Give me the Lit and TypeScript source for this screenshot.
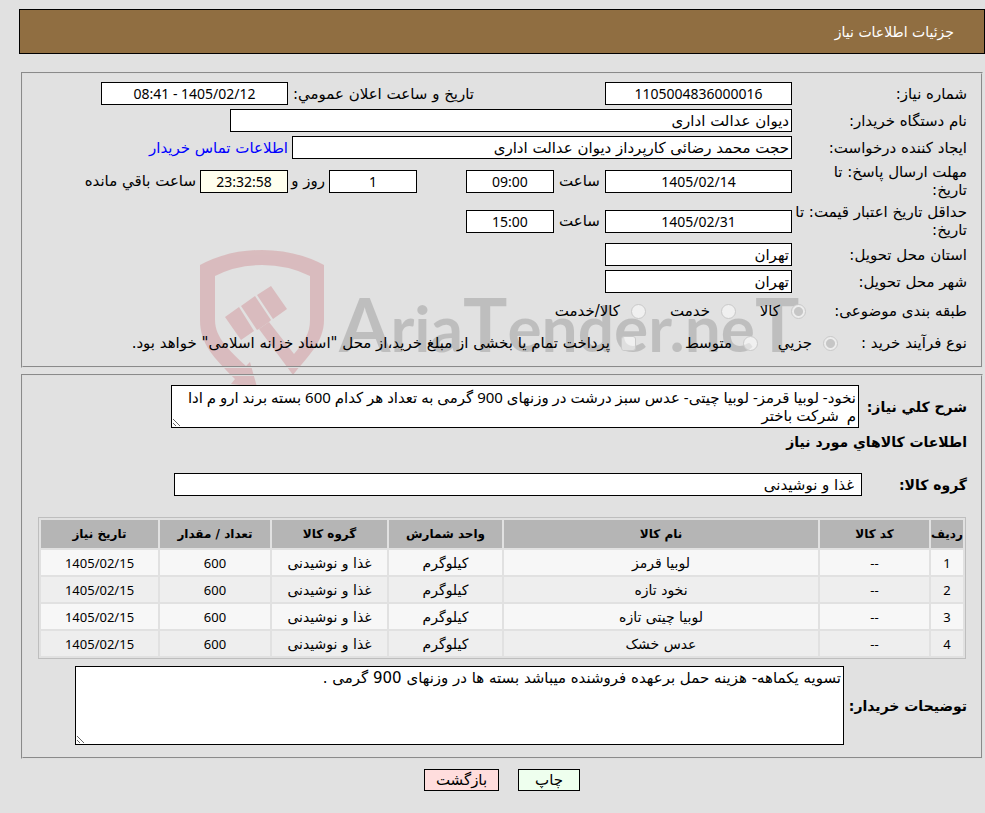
import { LitElement, html, css } from "lit";
import { customElement } from "lit/decorators.js";

interface Item {
  code: string;
  name: string;
  unit: string;
  group: string;
  count: string;
  date: string;
}

const item = (name: string): Item => ({
  code: "--",
  name,
  unit: "کیلوگرم",
  group: "غذا و نوشیدنی",
  count: "600",
  date: "1405/02/15",
});

const ITEMS: Item[] = ["لوبیا قرمز", "نخود تازه", "لوبیا چیتی تازه", "عدس خشک"].map(item);

const SUMMARY =
  "نخود- لوبیا قرمز- لوبیا چیتی- عدس سبز درشت در وزنهای 900 گرمی به تعداد هر کدام 600 بسته برند ارو م ادا\nم  شرکت باختر";
const NOTES = "تسویه یکماهه- هزینه حمل برعهده فروشنده میباشد بسته ها در وزنهای 900 گرمی .";

@customElement("brand-watermark")
export class BrandWatermark extends LitElement {
  static styles = css`
    :host {
      display: block;
      pointer-events: none;
    }
    .mark {
      display: block;
      direction: ltr;
    }
    .shield {
      fill: #c03a44;
      opacity: 0.22;
    }
    .name {
      fill: #000;
      opacity: 0.15;
      font-family: Lato, "Liberation Sans", sans-serif;
      font-weight: 700;
      font-size: 64px;
    }
    .cap {
      font-size: 74px;
    }
  `;

  render() {
    return html`
      <svg class="mark" width="640" height="140" viewBox="0 0 640 140" aria-hidden="true">
        <g class="shield">
          <path
            d="M0 15Q28 0 62 0T124 15V70C124 92 108 106 93 125L59 79L69 72L94 104C104 92 110 84 110 70V26Q88 15 62 15T15 26V70C15 88 30 101 46 116L50 112L57 137L31 134L35 129C14 108 0 94 0 70Z"
          />
          <path d="M25 67L39 57L54 81L41 90ZM41 56L55 46L71 70L69 72L59 79L57 80ZM57 45L71 36L87 59L73 69Z" />
        </g>
        <text class="name" x="139" y="102"><tspan class="cap">A</tspan>ria<tspan class="cap">T</tspan>ender.ne<tspan class="cap">T</tspan></text>
      </svg>
    `;
  }
}

@customElement("app-root")
export class AppRoot extends LitElement {
  static styles = css`
    :host {
      display: block;
      box-sizing: border-box;
      min-height: 100vh;
      padding: 9px 0 20px 19px;
      background: #e1e1e1;
      color: #000;
      font: 15px/18px "DejaVu Sans", sans-serif;
    }
    * {
      box-sizing: border-box;
    }
    input,
    textarea,
    button {
      font: inherit;
      color: inherit;
      margin: 0;
    }
    .banner {
      display: flex;
      align-items: center;
      height: 45px;
      padding: 0 30px;
      border: 1px solid #000;
      background: #906e41;
      color: #fff;
    }
    .title {
      margin: 0;
      font-size: 14px;
      font-weight: 400;
    }
    .body {
      position: relative;
      display: flex;
      flex-direction: column;
      gap: 6px;
      margin: 18px 2px 0;
    }
    .panel {
      position: relative;
      min-width: 0;
      margin: 0;
      padding: 6px 14px 7px;
      border: 2px groove #dedede;
    }
    .row {
      display: flex;
      align-items: center;
      min-height: 27px;
    }
    .tall {
      min-height: 40px;
    }
    .choices {
      min-height: 32px;
    }
    .caption {
      flex: none;
      width: 175px;
    }
    .caption.subject {
      width: 161px;
    }
    .caption.process {
      width: 129px;
    }
    .field {
      height: 23px;
      padding: 0 2px;
      border: 1px solid #000;
      border-radius: 0;
      background: #fff;
      min-width: 0;
    }
    .center {
      text-align: center;
      font-family: "Noto Sans", "DejaVu Sans", sans-serif;
      font-size: 14px;
    }
    .medium {
      width: 187px;
    }
    .short {
      width: 88px;
    }
    .wide {
      width: 562px;
    }
    .person {
      width: 500px;
    }
    .left {
      background: #ffffee;
    }
    .joint {
      width: 51px;
      text-align: center;
    }
    .days {
      width: 41px;
      padding-right: 4px;
      white-space: nowrap;
    }
    .announce {
      width: 186px;
      margin-right: 131px;
      white-space: nowrap;
    }
    .gap {
      margin-right: 49px;
    }
    .after {
      margin-right: 4px;
    }
    a {
      color: #00f;
      text-decoration: none;
    }
    .option {
      display: flex;
      align-items: center;
      gap: 11px;
      white-space: nowrap;
    }
    .option input {
      appearance: none;
      flex: none;
      width: 15px;
      height: 15px;
      border: 1px solid #c9c9c9;
      border-radius: 50%;
      background: rgba(255, 255, 255, 0.5);
    }
    .option input[type="checkbox"] {
      border-radius: 3px;
    }
    .option input:checked {
      background: radial-gradient(circle, #c6c6c6 4px, #ececec 5px);
    }
    .w70 {
      width: 70px;
    }
    .w80 {
      width: 80px;
    }
    .w90 {
      width: 90px;
    }
    .w122 {
      width: 122px;
    }
    .details {
      padding-top: 9px;
      padding-bottom: 12px;
    }
    .strong {
      font-size: 14px;
      font-weight: 700;
      margin: 0;
    }
    .strong-caption {
      flex: none;
      width: 108px;
    }
    .group-caption {
      flex: none;
      width: 105px;
    }
    .notes-caption {
      flex: none;
      width: 123px;
    }
    textarea {
      display: block;
      padding: 2px;
      border: 1px solid #000;
      border-radius: 0;
      background: #fff;
      min-width: 0;
      line-height: 18px;
    }
    .summary {
      width: 688px;
      height: 43px;
      font-family: "Noto Sans", "DejaVu Sans", sans-serif;
    }
    .notes {
      width: 769px;
      height: 79px;
    }
    .heading {
      padding: 4px 0;
      line-height: 20px;
    }
    .group {
      margin-top: 15px;
      min-height: 27px;
    }
    .groupname {
      width: 688px;
      padding: 0 7px;
    }
    .items {
      width: calc(100% - 2px);
      margin: 19px 1px 7px 0;
      table-layout: fixed;
      border: 1px solid #bebebe;
      border-collapse: separate;
      border-spacing: 2px;
      font-size: 14px;
      text-align: center;
    }
    .items th,
    .items td {
      padding: 0;
      height: 25px;
      background: #f7f7f7;
      white-space: nowrap;
    }
    .items th {
      height: 28px;
      background: #b5b5b5;
      font-size: 12px;
      font-weight: 700;
    }
    .items .num {
      font-family: "Noto Sans", sans-serif;
      font-size: 13px;
    }
    .items tbody tr:nth-child(even) td {
      background: #eee;
    }
    .c-row {
      width: 32px;
    }
    .c-code {
      width: 109px;
    }
    .c-unit {
      width: 113px;
    }
    .c-group {
      width: 115px;
    }
    .c-count {
      width: 110px;
    }
    .c-date {
      width: 117px;
    }
    .watermark {
      position: absolute;
      top: 178px;
      left: 179px;
    }
    .actions {
      display: flex;
      justify-content: center;
      gap: 19px;
      margin-top: 10px;
    }
    .btn {
      width: 75px;
      height: 22px;
      padding: 0;
      border: 1px solid #000;
      background: #fdd;
    }
    .print {
      width: 62px;
      background: #efe;
    }
  `;

  private field(id: string, value: string, classes: string, label: string) {
    return html`<input
      type="text"
      readonly
      id=${id}
      class="field ${classes}"
      .value=${value}
      aria-label=${label}
    />`;
  }

  private option(type: string, group: string, text: string, width: string, checked = false) {
    return html`<label class="option ${width}">
      <input type=${type} name=${group} ?checked=${checked} disabled />${text}
    </label>`;
  }

  render() {
    return html`
      <div dir="rtl">
        <header class="banner"><h1 class="title">جزئیات اطلاعات نیاز</h1></header>
        <main class="body">
          <brand-watermark class="watermark"></brand-watermark>
          <fieldset class="panel">
            <div class="row">
              <label class="caption" for="number">شماره نیاز:</label>
              ${this.field("number", "1105004836000016", "medium center", "شماره نیاز")}
              <label class="announce" for="announced">تاریخ و ساعت اعلان عمومي:</label>
              ${this.field("announced", "1405/02/12 - 08:41", "medium center", "تاریخ و ساعت اعلان عمومي")}
            </div>
            <div class="row">
              <label class="caption" for="buyer">نام دستگاه خریدار:</label>
              ${this.field("buyer", "دیوان عدالت اداری", "wide", "نام دستگاه خریدار")}
            </div>
            <div class="row">
              <label class="caption" for="creator">ایجاد کننده درخواست:</label>
              ${this.field("creator", "حجت محمد رضائی کارپرداز دیوان عدالت اداری", "person", "ایجاد کننده درخواست")}
              <a class="after" href="#contact">اطلاعات تماس خریدار</a>
            </div>
            <div class="row tall">
              <label class="caption" for="reply-date">مهلت ارسال پاسخ: تا<br />تاریخ:</label>
              ${this.field("reply-date", "1405/02/14", "medium center", "مهلت ارسال پاسخ")}
              <label class="joint" for="reply-time">ساعت</label>
              ${this.field("reply-time", "09:00", "short center", "ساعت")}
              ${this.field("days", "1", "short center gap", "روز")}
              <label class="days" for="days">روز و</label>
              ${this.field("remaining", "23:32:58", "short center left", "ساعت باقي مانده")}
              <label class="after" for="remaining">ساعت باقي مانده</label>
            </div>
            <div class="row tall">
              <label class="caption" for="valid-date">حداقل تاریخ اعتبار قیمت: تا<br />تاریخ:</label>
              ${this.field("valid-date", "1405/02/31", "medium center", "حداقل تاریخ اعتبار قیمت")}
              <label class="joint" for="valid-time">ساعت</label>
              ${this.field("valid-time", "15:00", "short center", "ساعت")}
            </div>
            <div class="row">
              <label class="caption" for="province">استان محل تحویل:</label>
              ${this.field("province", "تهران", "medium", "استان محل تحویل")}
            </div>
            <div class="row">
              <label class="caption" for="city">شهر محل تحویل:</label>
              ${this.field("city", "تهران", "medium", "شهر محل تحویل")}
            </div>
            <div class="row choices" role="radiogroup">
              <span class="caption subject">طبقه بندی موضوعی:</span>
              ${this.option("radio", "subject", "کالا", "w70", true)}
              ${this.option("radio", "subject", "خدمت", "w90")}
              ${this.option("radio", "subject", "کالا/خدمت", "")}
            </div>
            <div class="row choices" role="radiogroup">
              <span class="caption process">نوع فرآیند خرید :</span>
              ${this.option("radio", "process", "جزیي", "w80", true)}
              ${this.option("radio", "process", "متوسط", "w122")}
              ${this.option("checkbox", "treasury", 'پرداخت تمام یا بخشی از مبلغ خرید،از محل "اسناد خزانه اسلامی" خواهد بود.', "")}
            </div>
          </fieldset>

          <fieldset class="panel details">
            <div class="row">
              <label class="strong strong-caption" for="summary">شرح كلي نیاز:</label>
              <textarea id="summary" class="summary" readonly .value=${SUMMARY}></textarea>
            </div>
            <h2 class="strong heading">اطلاعات كالاهاي مورد نیاز</h2>
            <div class="row group">
              <label class="strong group-caption" for="group">گروه کالا:</label>
              ${this.field("group", "غذا و نوشیدنی", "groupname", "گروه کالا")}
            </div>
            <table class="items">
              <thead>
                <tr>
                  <th class="c-row">ردیف</th>
                  <th class="c-code">کد کالا</th>
                  <th>نام کالا</th>
                  <th class="c-unit">واحد شمارش</th>
                  <th class="c-group">گروه کالا</th>
                  <th class="c-count">تعداد / مقدار</th>
                  <th class="c-date">تاریخ نیاز</th>
                </tr>
              </thead>
              <tbody>
                ${ITEMS.map(
                  (it, i) => html`<tr>
                    <td class="num">${i + 1}</td>
                    <td class="num">${it.code}</td>
                    <td>${it.name}</td>
                    <td>${it.unit}</td>
                    <td>${it.group}</td>
                    <td class="num">${it.count}</td>
                    <td class="num">${it.date}</td>
                  </tr>`
                )}
              </tbody>
            </table>
            <div class="row">
              <label class="strong notes-caption" for="notes">توضیحات خریدار:</label>
              <textarea id="notes" class="notes" readonly .value=${NOTES}></textarea>
            </div>
          </fieldset>
        </main>
        <div class="actions">
          <button type="button" class="btn print">چاپ</button>
          <button type="button" class="btn">بازگشت</button>
        </div>
      </div>
    `;
  }
}
